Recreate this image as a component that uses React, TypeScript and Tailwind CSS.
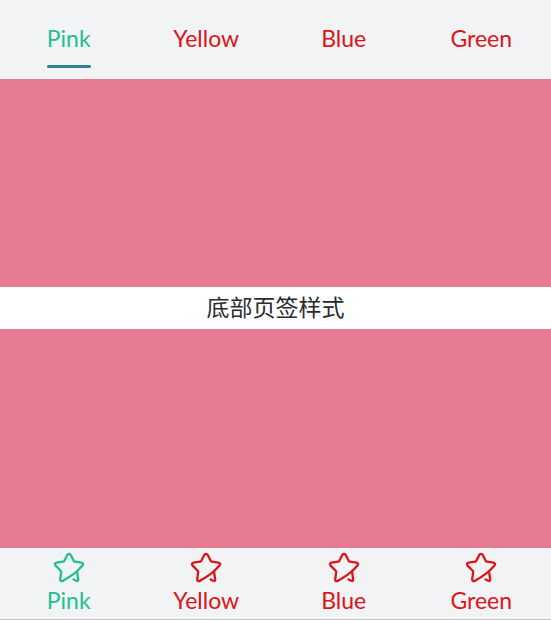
import { useState } from "react";

const tabs = ["Pink", "Yellow", "Blue", "Green"];

function StarIcon() {
  return (
    <svg
      viewBox="0 0 32 32"
      className="size-8"
      fill="none"
      stroke="currentColor"
      strokeWidth="2.3"
      strokeLinecap="round"
      strokeLinejoin="round"
      aria-hidden="true"
    >
      <path d="M14.4 2.8Q16 .8 17.6 2.8L20.8 9Q21.1 9.6 21.8 9.7L28.4 10.6Q31 11.2 29.6 13.4L25 18.2C21.5 21.8 16 25.2 10.4 28.6Q7 30.2 7.2 27L8.2 20.2Q8.3 19.4 7.7 18.8L2.6 13.6Q1 11.2 3.6 10.6L10.2 9.7Q10.9 9.6 11.2 9Z" />
      <path d="M24 19.4L25.2 27.4Q25.2 29.6 23.2 28.8L20.6 27.4" />
    </svg>
  );
}

export default function App() {
  const [top, setTop] = useState("Pink");
  const [bottom, setBottom] = useState("Pink");

  return (
    <main className="flex min-h-screen flex-col bg-[#e67c92] font-[Lato,'Noto_Sans_CJK_SC',sans-serif] text-[23px] leading-7">
      <nav aria-label="Top tabs" className="grid h-[79px] grid-cols-4 bg-[#f1f3f5] pr-px">
        {tabs.map((tab) => (
          <button
            key={tab}
            type="button"
            onClick={() => setTop(tab)}
            className={`flex flex-col items-center pt-6 ${top === tab ? "text-[#25bd94]" : "text-[#dc1318]"}`}
          >
            <span className={`relative pb-4 after:absolute after:inset-x-0 after:bottom-0 after:h-[3px] after:rounded-sm ${top === tab ? "after:bg-[#318391]" : ""}`}>
              {tab}
            </span>
          </button>
        ))}
      </nav>
      <section aria-label={top} className="h-52" />
      <h2 className="bg-white pt-[5px] pb-[9px] text-center font-['Noto_Sans_CJK_SC',sans-serif] font-normal text-[#292b2f]">
        底部页签样式
      </h2>
      <section aria-label={bottom} className="flex-1" />
      <nav aria-label="Bottom tabs" className="grid h-[72px] grid-cols-4 border-b border-[#bfc1c3] bg-[#f1f3f5] pr-px">
        {tabs.map((tab) => (
          <button
            key={tab}
            type="button"
            onClick={() => setBottom(tab)}
            className={`flex flex-col items-center gap-0.5 pt-1 ${bottom === tab ? "text-[#25bd94]" : "text-[#dc1318]"}`}
          >
            <StarIcon />
            <span>{tab}</span>
          </button>
        ))}
      </nav>
    </main>
  );
}
